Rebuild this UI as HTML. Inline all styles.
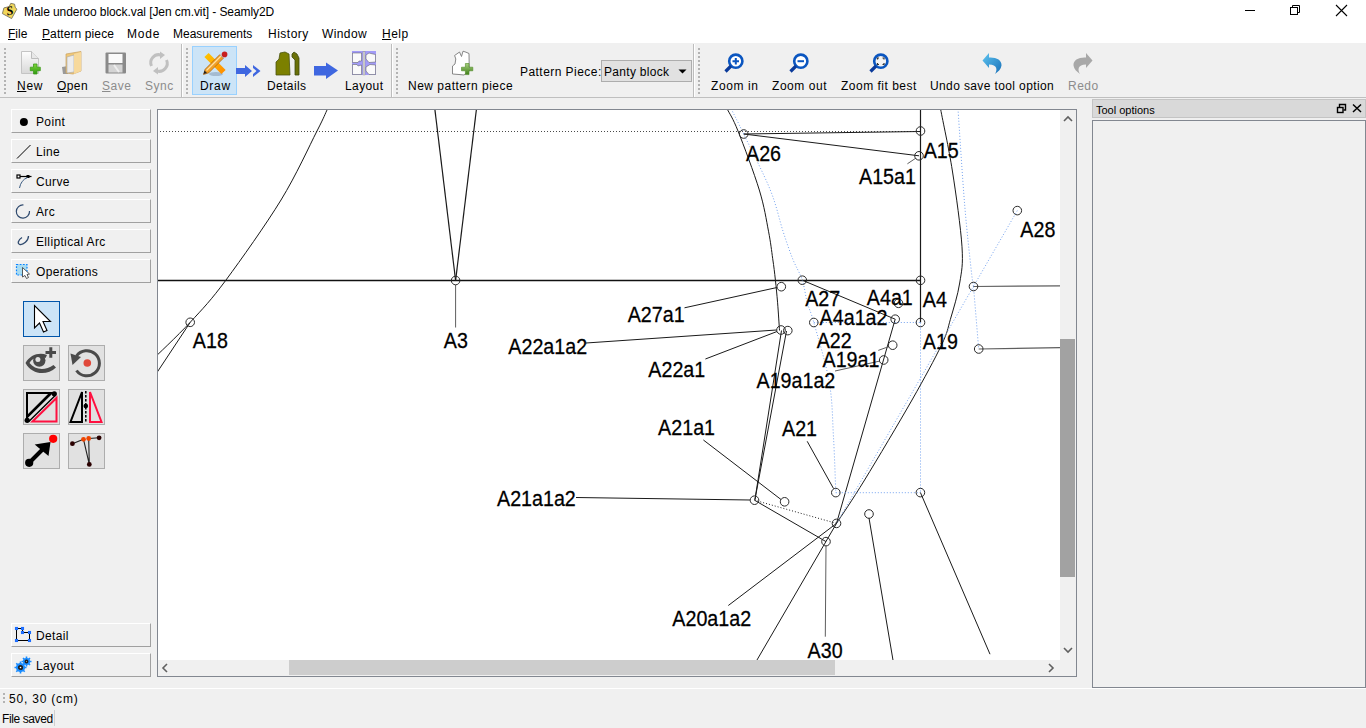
<!DOCTYPE html>
<html><head><meta charset="utf-8">
<style>
*{margin:0;padding:0;box-sizing:border-box}
html,body{width:1366px;height:728px;overflow:hidden;background:#f0f0f0;font-family:"Liberation Sans",sans-serif;font-size:12px;color:#000}
.a{position:absolute;display:block}
.t{position:absolute;white-space:nowrap;line-height:12px;font-size:12px}
.u{text-decoration:underline;text-underline-offset:1px}
.btn{position:absolute;left:11px;width:140px;height:24px;background:#f0f0f0;border-top:1px solid #fff;border-left:1px solid #fff;border-right:1px solid #a0a0a0;border-bottom:1px solid #a0a0a0}
.btn span{position:absolute;left:24px;top:6px;line-height:12px;letter-spacing:0.35px}
.btn svg{position:absolute;left:0;top:0}
.tb{position:absolute;width:37px;height:36px;background:#e1e1e1;border:1px solid #adadad}
.tb svg{position:absolute;left:-1px;top:-1px}
.grip{position:absolute;width:2px;background-image:linear-gradient(#b3b3b3 0 2px,transparent 2px);background-size:2px 4px;background-repeat:repeat-y}
.dis{color:#8c8c8c}
</style></head><body>
<!-- title + menu background -->
<div class="a" style="left:0;top:0;width:1366px;height:43px;background:#fff"></div>
<svg class="a" style="left:0;top:0" width="24" height="22" viewBox="0 0 24 22">
<path d="M10.8,3.3 L14.6,4.2 L15.2,7.2 L16.8,9.2 L11.6,18.6 L2.4,13.6 L3.9,7.9 L9.2,6.6 Z" fill="#f2d65a" stroke="#6b6a55" stroke-width="0.8"/>
<text transform="translate(7.2,15.5) rotate(-12)" font-family="Liberation Serif" font-style="italic" font-weight="bold" font-size="12.5" fill="#000">S</text>
</svg>
<div class="t" style="left:24px;top:6px;letter-spacing:-0.07px">Male underoo block.val [Jen cm.vit] - Seamly2D</div>
<!-- window controls -->
<div class="a" style="left:1245px;top:10px;width:10px;height:1px;background:#000"></div>
<svg class="a" style="left:1289px;top:4px" width="12" height="12"><rect x="1.5" y="3.5" width="7" height="7" fill="none" stroke="#000"/><path d="M3.5,3.5 V1.5 H10.5 V8.5 H8.5" fill="none" stroke="#000"/></svg>
<svg class="a" style="left:1335px;top:4px" width="13" height="13"><path d="M1,1 L12,12 M12,1 L1,12" stroke="#000" stroke-width="1.1"/></svg>
<!-- menu -->
<div class="t" style="left:8px;top:28px"><span class="u">F</span>ile</div>
<div class="t" style="left:42px;top:28px;letter-spacing:0.1px"><span class="u">P</span>attern piece</div>
<div class="t" style="left:127px;top:28px;letter-spacing:0.8px">Mode</div>
<div class="t" style="left:173px;top:28px">Measurements</div>
<div class="t" style="left:268px;top:28px;letter-spacing:0.5px">History</div>
<div class="t" style="left:322px;top:28px;letter-spacing:0.4px">Window</div>
<div class="t" style="left:382px;top:28px;letter-spacing:0.5px"><span class="u">H</span>elp</div>

<!-- toolbar -->
<div class="a" style="left:0;top:97px;width:1366px;height:1px;background:#bfbfbf"></div>
<div class="grip" style="left:4px;top:48px;height:46px"></div>
<div class="a" style="left:181px;top:44px;width:1px;height:53px;background:#bdbdbd"></div><div class="a" style="left:182px;top:44px;width:1px;height:53px;background:#fff"></div>
<div class="grip" style="left:186px;top:48px;height:46px"></div>
<div class="a" style="left:391px;top:44px;width:1px;height:53px;background:#bdbdbd"></div><div class="a" style="left:392px;top:44px;width:1px;height:53px;background:#fff"></div>
<div class="grip" style="left:396px;top:48px;height:46px"></div>
<div class="a" style="left:693px;top:44px;width:1px;height:53px;background:#bdbdbd"></div><div class="a" style="left:694px;top:44px;width:1px;height:53px;background:#fff"></div>
<div class="grip" style="left:698px;top:48px;height:46px"></div>

<!-- New -->
<svg class="a" style="left:18px;top:49px" width="26" height="28" viewBox="0 0 26 28">
<defs><linearGradient id="gdoc" x1="0" y1="0" x2="0" y2="1"><stop offset="0" stop-color="#fdfdfd"/><stop offset="1" stop-color="#d8d8d8"/></linearGradient>
<linearGradient id="ggr" x1="0" y1="0" x2="0" y2="1"><stop offset="0" stop-color="#7fd63a"/><stop offset="1" stop-color="#2f9a12"/></linearGradient></defs>
<path d="M3.5,2.5 H13.5 L20.5,9.5 V24.5 H3.5 Z" fill="url(#gdoc)" stroke="#c4c4c4"/>
<path d="M13.5,2.5 V9.5 H20.5" fill="#e8e8e8" stroke="#bdbdbd"/>
<path d="M12.3,18.2 H15.5 V15 H19 V18.2 H22.3 V21.7 H19 V25 H15.5 V21.7 H12.3 Z" fill="url(#ggr)" stroke="#3d9a1b" stroke-width="0.8"/>
</svg>
<div class="t" style="left:17px;top:80px;letter-spacing:0.7px"><span class="u">N</span>ew</div>
<!-- Open -->
<svg class="a" style="left:60px;top:50px" width="24" height="26" viewBox="0 0 24 26">
<path d="M2,17 L8,16 L8,24 L3,24 Z" fill="#9a9a9a"/>
<path d="M6,4 L21,1.5 L21,21 L13,24 L6,23 Z" fill="#f0c878" stroke="#c9a060" stroke-width="0.7"/>
<path d="M7,7 L14,5 L14,22 L7,23 Z" fill="#ececec" stroke="#a8a8a8" stroke-width="0.6"/>
<path d="M14,4 L21,2 L21,21 L14,24 Z" fill="#f7d99c"/>
</svg>
<div class="t" style="left:57px;top:80px;letter-spacing:0.4px"><span class="u">O</span>pen</div>
<!-- Save -->
<svg class="a" style="left:105px;top:52px" width="22" height="22" viewBox="0 0 22 22">
<rect x="0.5" y="0.5" width="20.5" height="21" rx="1" fill="#8a8a8a"/>
<rect x="3.5" y="2" width="14" height="9" fill="#fafafa"/>
<rect x="3.5" y="12.5" width="14" height="8" fill="#d4d4d4"/>
<path d="M9,13 L14,20" stroke="#eee" stroke-width="2"/>
</svg>
<div class="t dis" style="left:102px;top:80px;letter-spacing:0.5px"><span class="u">S</span>ave</div>
<!-- Sync -->
<svg class="a" style="left:147px;top:51px" width="24" height="24" viewBox="0 0 24 24">
<path d="M4.5,15 A8,8 0 0 1 14,4" fill="none" stroke="#c0c0c0" stroke-width="3"/>
<path d="M13,0.5 L18,4 L13,8 Z" fill="#c0c0c0"/>
<path d="M19.5,9 A8,8 0 0 1 10,20" fill="none" stroke="#c0c0c0" stroke-width="3"/>
<path d="M11,16 L6,20 L11,23.5 Z" fill="#c0c0c0"/>
</svg>
<div class="t dis" style="left:145px;top:80px;letter-spacing:0.5px">Sync</div>

<!-- Draw (active) -->
<div class="a" style="left:192px;top:46px;width:45px;height:49px;background:#cce4f7;border:1px solid #99d1ff"></div>
<svg class="a" style="left:200px;top:50px" width="30" height="28" viewBox="0 0 30 28">
<defs><linearGradient id="grul" x1="0" y1="0" x2="1" y2="1"><stop offset="0" stop-color="#ffc800"/><stop offset="1" stop-color="#ff8a00"/></linearGradient></defs>
<ellipse cx="16" cy="24" rx="7" ry="2" fill="#8aa0b8" opacity="0.6"/>
<path d="M8.6,2.9 L25.6,19.9 L21.4,24.1 L4.4,7.1 Z" fill="url(#grul)"/>
<path d="M3.5,24.5 L5.2,19.2 L19.7,4.7 L23.3,8.3 L8.8,22.8 Z" fill="#f0a028" stroke="#a85c08" stroke-width="0.7"/>
<path d="M6.5,20.5 L21,6" stroke="#ffe0a0" stroke-width="1.2"/>
<path d="M19.7,4.7 L21.5,2.9 L25.1,6.5 L23.3,8.3 Z" fill="#c8c8c8"/>
<circle cx="24.6" cy="4.4" r="2.8" fill="#c82020"/>
<path d="M3.5,24 L4.5,20.5 L7,23 Z" fill="#222"/>
</svg>
<div class="t" style="left:200px;top:80px;letter-spacing:0.7px">Draw</div>
<svg class="a" style="left:236px;top:64px" width="26" height="14" viewBox="0 0 26 14">
<path d="M0,4 H9 V1 L16,7 L9,13 V10 H0 Z" fill="#3f67e0"/>
<path d="M17,1 L24.5,7 L17,13 L17,10 L20.5,7 L17,4 Z" fill="#3f67e0"/>
</svg>
<!-- Details -->
<svg class="a" style="left:274px;top:51px" width="28" height="26" viewBox="0 0 28 26">
<path d="M2,24 L2,11 L5,8 L6,2 L11,1 L15,3 L16,24 Z" fill="#7c8000" stroke="#4b5410" stroke-width="0.8"/>
<path d="M18,3 L20,1 L23,3 L25,7 L25,24 L21,24 L21,9 L18,6 Z" fill="#6a7008" stroke="#3e4a10" stroke-width="0.8"/>
</svg>
<div class="t" style="left:267px;top:80px;letter-spacing:0.4px">Details</div>
<svg class="a" style="left:313px;top:62px" width="26" height="18" viewBox="0 0 26 18">
<path d="M1,4 H13 V0.5 L25,8.5 L13,17 V13.5 H1 Z" fill="#3f67e0"/>
</svg>
<!-- Layout -->
<svg class="a" style="left:351px;top:50px" width="26" height="26" viewBox="0 0 26 26">
<rect x="1" y="1" width="24" height="24" fill="#a39cf8"/>
<path d="M1.5,3 H10.5 V11 L8,11 L7,12.5 L1.5,12.5 Z" fill="#fafafa" stroke="#555" stroke-width="0.5"/>
<path d="M1.5,14.5 L6,14.5 L7,16 L10.5,15 V24.5 H1.5 Z" fill="#fafafa" stroke="#555" stroke-width="0.5"/>
<path d="M15,5 L18,3 L22,4 L24.5,4.5 V12 L18,12.5 L15,9 Z" fill="#fafafa" stroke="#555" stroke-width="0.5"/>
<path d="M15,17 L19,14.5 L24.5,15 V24.5 H18 L15,21 Z" fill="#fafafa" stroke="#555" stroke-width="0.5"/>
<rect x="12" y="1.5" width="2" height="23.5" fill="#d8d8d8" stroke="#888" stroke-width="0.4"/>
</svg>
<div class="t" style="left:345px;top:80px;letter-spacing:0.4px">Layout</div>

<!-- New pattern piece -->
<svg class="a" style="left:450px;top:49px" width="26" height="28" viewBox="0 0 26 28">
<defs><linearGradient id="ggr2" x1="0" y1="0" x2="0" y2="1"><stop offset="0" stop-color="#a8d080"/><stop offset="1" stop-color="#3f7f18"/></linearGradient></defs>
<path d="M4.6,6.5 L9.5,3 L11.5,7.5 L13,2.2 L16,3.2 L19,4.5 L19.3,22 L14,26 L9,25.5 L2.5,25 L2.5,17 L5,15 L5.8,10 Z" fill="#fff" stroke="#7a7a7a" stroke-width="0.9"/>
<path d="M11.5,18.2 H15.4 V14.5 H19 V18.2 H22.8 V21.8 H19 V25.6 H15.4 V21.8 H11.5 Z" fill="url(#ggr2)" stroke="#4e8a24" stroke-width="0.6"/>
</svg>
<div class="t" style="left:408px;top:80px;letter-spacing:0.5px">New pattern piece</div>
<div class="t" style="left:520px;top:66px;letter-spacing:0.45px">Pattern Piece:</div>
<div class="a" style="left:601px;top:60px;width:91px;height:22px;background:#e1e1e1;border:1px solid #adadad"></div>
<div class="t" style="left:604px;top:66px;letter-spacing:0.3px">Panty block</div>
<svg class="a" style="left:678px;top:69px" width="10" height="6"><path d="M0.5,0.5 H8.5 L4.5,4.5 Z" fill="#000"/></svg>

<!-- Zoom icons -->
<svg class="a" style="left:722px;top:50px" width="24" height="24" viewBox="0 0 24 24">
<circle cx="13.8" cy="11.2" r="6.6" fill="#fff" stroke="#0b56c0" stroke-width="2.6"/>
<path d="M9,16 L3.5,21.5" stroke="#0a3a9a" stroke-width="3.2"/>
<path d="M10.5,11.2 H17 M13.8,8 V14.5" stroke="#0b56c0" stroke-width="2"/>
</svg>
<div class="t" style="left:711px;top:80px;letter-spacing:0.6px">Zoom in</div>
<svg class="a" style="left:787px;top:50px" width="24" height="24" viewBox="0 0 24 24">
<circle cx="13.8" cy="11.2" r="6.6" fill="#fff" stroke="#0b56c0" stroke-width="2.6"/>
<path d="M9,16 L3.5,21.5" stroke="#0a3a9a" stroke-width="3.2"/>
<path d="M10.5,11.2 H17" stroke="#0b56c0" stroke-width="2"/>
</svg>
<div class="t" style="left:772px;top:80px;letter-spacing:0.55px">Zoom out</div>
<svg class="a" style="left:867px;top:50px" width="24" height="24" viewBox="0 0 24 24">
<circle cx="13.8" cy="11.2" r="6.6" fill="#f4f4f4" stroke="#0b56c0" stroke-width="2.6"/>
<path d="M9,16 L3.5,21.5" stroke="#0a3a9a" stroke-width="3.2"/>
<path d="M10.5,9.5 V8 H12 M15.5,8 H17 V9.5 M17,13 V14.5 H15.5 M12,14.5 H10.5 V13" fill="none" stroke="#333" stroke-width="1.2"/>
</svg>
<div class="t" style="left:841px;top:80px;letter-spacing:0.5px">Zoom fit best</div>
<!-- Undo / Redo -->
<svg class="a" style="left:981px;top:51px" width="22" height="24" viewBox="0 0 22 24">
<defs><linearGradient id="gund" x1="0" y1="0" x2="1" y2="1"><stop offset="0" stop-color="#5ec4f0"/><stop offset="1" stop-color="#1870b8"/></linearGradient></defs>
<path d="M1.5,9.5 L8,2 V6.5 C15,6 21,9 20.5,14.5 C20,18 17.5,20.5 14,23 C16.5,19 16.5,13.5 8,13.5 V17 Z" fill="url(#gund)"/>
</svg>
<div class="t" style="left:930px;top:80px;letter-spacing:0.38px">Undo save tool option</div>
<svg class="a" style="left:1072px;top:51px" width="22" height="24" viewBox="0 0 22 24">
<path d="M20.5,9.5 L14,2 V6.5 C7,6 1,9 1.5,14.5 C2,18 4.5,20.5 8,23 C5.5,19 5.5,13.5 14,13.5 V17 Z" fill="#a8a8a8"/>
</svg>
<div class="t dis" style="left:1068px;top:80px;letter-spacing:0.5px">Redo</div>

<!-- left panel buttons -->
<div class="btn" style="top:109px"><svg width="24" height="24"><circle cx="11.9" cy="11.9" r="4" fill="#000"/></svg><span>Point</span></div>
<div class="btn" style="top:139px"><svg width="24" height="24"><path d="M5,18.5 L18.5,5" stroke="#000" stroke-width="1"/></svg><span>Line</span></div>
<div class="btn" style="top:169px"><svg width="24" height="24"><path d="M6.5,6.5 H19.5" stroke="#000" stroke-width="1.2"/><rect x="5" y="5" width="3" height="3" fill="#fff" stroke="#000" stroke-width="1.2"/><rect x="14.5" y="5" width="3" height="3" fill="#000"/><path d="M15.5,7.5 Q9,10 7.5,18" fill="none" stroke="#3a5a80" stroke-width="1"/></svg><span>Curve</span></div>
<div class="btn" style="top:199px"><svg width="24" height="24"><path d="M11.5,5 A6.6,6.6 0 1 0 17.5,11" fill="none" stroke="#2f4a6e" stroke-width="1.2"/></svg><span>Arc</span></div>
<div class="btn" style="top:229px"><svg width="24" height="24"><path d="M10,7.5 C6,10 5,14 8,14.5 C11,15 16.5,11 16.5,6" fill="none" stroke="#2f4a6e" stroke-width="1.3"/></svg><span>Elliptical Arc</span></div>
<div class="btn" style="top:259px"><svg width="24" height="24"><rect x="4.5" y="4.5" width="10.5" height="10.5" fill="#a8dcf2" stroke="#0a84ff" stroke-width="1.2" stroke-dasharray="1.8 1.4"/><path d="M10.5,7.5 L17.5,14 L15,14.5 L16.5,17.5 L14.5,18.5 L13,15.5 L10.5,17 Z" fill="#fff" stroke="#333" stroke-width="0.8"/></svg><span>Operations</span></div>
<div class="btn" style="top:623px"><svg width="24" height="24"><path d="M4.5,4.5 H10.5 V8.5 H17.5 V16.5 H4.5 Z" fill="none" stroke="#000" stroke-width="1"/><g fill="#fff" stroke="#1a6cff" stroke-width="1.1"><rect x="3.5" y="3.5" width="2" height="2"/><rect x="9.5" y="3.5" width="2" height="2"/><rect x="9.5" y="7.5" width="2" height="2"/><rect x="16.5" y="7.5" width="2" height="2"/><rect x="16.5" y="15.5" width="2" height="2"/><rect x="3.5" y="15.5" width="2" height="2"/></g></svg><span>Detail</span></div>
<div class="btn" style="top:653px"><svg width="24" height="24"><g fill="#1a8cff"><circle cx="8.5" cy="13.5" r="4.6"/><circle cx="14.5" cy="7.5" r="3.6"/></g><g stroke="#1a8cff" stroke-width="1.6"><path d="M8.5,7.5 V19.5 M2.5,13.5 H14.5 M4.3,9.3 L12.7,17.7 M12.7,9.3 L4.3,17.7"/><path d="M14.5,2.5 V12.5 M9.5,7.5 H19.5 M11,4 L18,11 M18,4 L11,11"/></g><circle cx="8.5" cy="13.5" r="1.7" fill="#fff" stroke="#222" stroke-width="1.8"/><circle cx="14.5" cy="7.5" r="1.2" fill="#fff" stroke="#222" stroke-width="1.5"/></svg><span>Layout</span></div>

<!-- tool grid -->
<div class="tb" style="left:23px;top:301px;background:#cce4f7;border-color:#0055aa"><svg width="37" height="36" viewBox="0 0 37 36"><path d="M11.5,4.5 V27 L16.5,22 L20.5,31 L24,29.5 L20,20.5 H27.5 Z" fill="#fff" stroke="#000" stroke-width="1.1"/></svg></div>
<div class="tb" style="left:23px;top:345px"><svg width="37" height="36" viewBox="0 0 37 36"><path d="M2.5,18 C7,10 16,7 24,10 L22.5,13 C16,11 9,13 6.5,18 C12,25 22,26 30.5,20 L33,22.5 C24,31 9,30 2.5,18 Z" fill="#4a4a4a"/><circle cx="16.3" cy="15.6" r="6.2" fill="#4a4a4a"/><circle cx="14.9" cy="14.4" r="2.5" fill="#e1e1e1"/><path d="M22.5,7.5 H33 M27.8,2.3 V12.8" stroke="#4a4a4a" stroke-width="3"/></svg></div>
<div class="tb" style="left:68px;top:345px"><svg width="37" height="36" viewBox="0 0 37 36"><path d="M8.5,11 A12.6,12.6 0 1 1 8.5,25.5" fill="none" stroke="#4a4a4a" stroke-width="3"/><path d="M2.5,8.5 L13,12 L4.5,20 Z" fill="#4a4a4a"/><circle cx="19.3" cy="18" r="3.8" fill="#e0483a"/></svg></div>
<div class="tb" style="left:23px;top:389px"><svg width="37" height="36" viewBox="0 0 37 36"><path d="M4,4 H27.5 L4,27.5 Z" fill="none" stroke="#000" stroke-width="2"/><path d="M5.8,32.5 L32.5,6.3 M3,29.8 L29.8,3.3" stroke="#000" stroke-width="1.4"/><circle cx="4.2" cy="31.3" r="2.6" fill="#000"/><circle cx="31.3" cy="4.8" r="2.6" fill="#000"/><path d="M33.5,9 V32.5 H9.5 Z" fill="none" stroke="#ff1040" stroke-width="2"/></svg></div>
<div class="tb" style="left:68px;top:389px"><svg width="37" height="36" viewBox="0 0 37 36"><path d="M14,3 V33 H2.5 Z" fill="none" stroke="#000" stroke-width="2"/><path d="M17.8,2 V34" stroke="#000" stroke-width="1.5" stroke-dasharray="2.5 1.5"/><circle cx="17.8" cy="17" r="2.3" fill="#000"/><path d="M22,3 V33 H33.5 Z" fill="none" stroke="#ff1040" stroke-width="2"/></svg></div>
<div class="tb" style="left:23px;top:433px"><svg width="37" height="36" viewBox="0 0 37 36"><circle cx="6.2" cy="29.8" r="4.1" fill="#000"/><path d="M7,29 L22,14" stroke="#000" stroke-width="4"/><path d="M27.5,9 L11.7,11.5 L25.5,23 Z" fill="#000"/><circle cx="30.2" cy="5.8" r="4.1" fill="#ff0000"/></svg></div>
<div class="tb" style="left:68px;top:433px"><svg width="37" height="36" viewBox="0 0 37 36"><path d="M4.4,10.7 L15.5,6.3 L21.3,31.4 M20.7,5.5 L31.1,4.8 M20.7,5.5 L21.3,31.4" fill="none" stroke="#222" stroke-width="1.1"/><g fill="#2a0000"><circle cx="4.4" cy="10.7" r="2.4"/><circle cx="31.1" cy="4.8" r="2.4"/><circle cx="21.3" cy="31.4" r="2.4"/></g><g fill="#ee4400"><circle cx="15.5" cy="6.3" r="2.4"/><circle cx="20.7" cy="5.5" r="2.4"/></g></svg></div>

<!-- canvas frame -->
<div class="a" style="left:157px;top:109px;width:920px;height:568px;border:1px solid #828790;background:#fff"></div>
<svg class="a" style="left:158px;top:110px" width="902" height="550" viewBox="158 110 902 550"><g font-family="Liberation Sans" font-size="20" fill="#000" stroke="#000" stroke-width="0.25"><line x1="160.0" y1="131.5" x2="920.5" y2="131.5" stroke="#4a4a4a" stroke-width="1" stroke-dasharray="1 2"/>
<path d="M333.0,98.0 C332.1,99.8 330.2,103.5 327.5,109.0 C324.8,114.5 324.8,115.8 317.0,131.0 C309.2,146.2 296.2,175.2 281.0,200.0 C265.8,224.8 241.1,259.6 226.0,280.0 C210.9,300.4 202.9,308.6 190.2,322.3 C177.5,336.0 156.7,355.4 150.0,362.0" fill="none" stroke="#1a1a1a" stroke-width="1"/>
<line x1="190.1" y1="322.5" x2="140.0" y2="398.2" stroke="#1a1a1a" stroke-width="1"/>
<line x1="158.0" y1="280.5" x2="920.5" y2="280.5" stroke="#111" stroke-width="1.3"/>
<line x1="433.5" y1="98.0" x2="455.6" y2="280.5" stroke="#1a1a1a" stroke-width="1.2"/>
<line x1="477.8" y1="98.0" x2="455.6" y2="280.5" stroke="#1a1a1a" stroke-width="1.2"/>
<line x1="455.6" y1="285.0" x2="455.6" y2="327.5" stroke="#5e5e5e" stroke-width="1"/>
<line x1="743.7" y1="134.0" x2="920.5" y2="131.5" stroke="#1a1a1a" stroke-width="1"/>
<line x1="743.7" y1="134.0" x2="919.0" y2="155.8" stroke="#1a1a1a" stroke-width="1"/>
<line x1="907.4" y1="163.8" x2="916.0" y2="158.0" stroke="#5e5e5e" stroke-width="1"/>
<path d="M721.0,98.0 C722.0,99.8 724.4,103.5 727.2,109.0 C730.0,114.5 732.6,117.5 738.0,131.0 C743.4,144.5 754.2,173.3 759.3,190.0 C764.4,206.7 766.3,219.8 768.5,231.2 C770.7,242.6 771.6,250.6 772.7,258.7 C773.9,266.8 774.6,272.6 775.4,280.0 C776.2,287.4 776.9,294.4 777.6,302.8 C778.3,311.2 779.2,325.9 779.5,330.5" fill="none" stroke="#1a1a1a" stroke-width="1"/>
<path d="M726.0,98.0 C726.9,99.8 728.3,103.0 731.3,109.0 C734.2,115.0 737.2,120.5 743.7,134.0 C750.2,147.5 763.8,173.8 770.3,190.0 C776.8,206.2 779.3,219.8 783.0,231.2 C786.7,242.6 789.4,250.6 792.6,258.7 C795.8,266.8 799.8,272.6 802.2,280.0 C804.7,287.4 805.4,295.7 807.3,302.8 C809.2,309.9 810.1,309.2 813.8,322.5 C817.5,335.8 826.0,363.2 829.3,382.4 C832.6,401.5 832.4,419.0 833.5,437.4 C834.6,455.8 835.4,483.4 835.8,492.6" fill="none" stroke="#74a2ef" stroke-width="1" stroke-dasharray="1 2"/>
<line x1="920.5" y1="98.0" x2="920.5" y2="322.5" stroke="#1a1a1a" stroke-width="1.2"/>
<line x1="920.5" y1="322.5" x2="920.5" y2="492.5" stroke="#74a2ef" stroke-width="1" stroke-dasharray="1 2"/>
<path d="M939.0,98.0 C939.3,99.8 938.4,96.8 940.6,109.0 C942.8,121.2 948.8,148.0 952.4,171.0 C956.0,194.0 960.8,228.1 962.0,246.8 C963.2,265.5 961.6,270.9 959.7,283.0 C957.8,295.1 953.4,309.0 950.4,319.3 C947.4,329.6 947.9,331.6 941.5,345.0 C935.1,358.4 924.8,377.5 912.0,400.0 C899.2,422.5 877.2,459.4 864.6,480.0 C852.0,500.6 841.2,516.2 836.5,523.4" fill="none" stroke="#1a1a1a" stroke-width="1"/>
<path d="M957.5,98.0 C957.6,99.8 956.8,91.3 958.0,109.0 C959.2,126.7 962.4,177.2 964.6,204.0 C966.8,230.8 969.7,256.2 971.2,270.0 C972.7,283.8 973.1,283.8 973.5,286.5" fill="none" stroke="#74a2ef" stroke-width="1" stroke-dasharray="1 2"/>
<line x1="973.5" y1="286.5" x2="978.7" y2="349.0" stroke="#74a2ef" stroke-width="1" stroke-dasharray="1 2"/>
<line x1="1017.3" y1="210.6" x2="836.5" y2="523.4" stroke="#74a2ef" stroke-width="1" stroke-dasharray="1 2"/>
<line x1="973.5" y1="286.5" x2="1060.0" y2="285.8" stroke="#5e5e5e" stroke-width="1.2"/>
<line x1="978.7" y1="349.0" x2="1060.0" y2="347.6" stroke="#5e5e5e" stroke-width="1.2"/>
<line x1="802.3" y1="280.2" x2="895.2" y2="319.2" stroke="#1a1a1a" stroke-width="1"/>
<line x1="895.2" y1="319.2" x2="836.5" y2="523.4" stroke="#1a1a1a" stroke-width="1"/>
<line x1="813.8" y1="322.5" x2="920.5" y2="322.5" stroke="#74a2ef" stroke-width="1" stroke-dasharray="1 2"/>
<line x1="684.5" y1="307.8" x2="777.0" y2="287.5" stroke="#1a1a1a" stroke-width="1"/>
<line x1="586.0" y1="343.0" x2="776.5" y2="330.0" stroke="#1a1a1a" stroke-width="1"/>
<line x1="705.4" y1="359.0" x2="777.0" y2="331.5" stroke="#1a1a1a" stroke-width="1"/>
<line x1="781.5" y1="330.5" x2="754.9" y2="499.8" stroke="#1a1a1a" stroke-width="1"/>
<line x1="786.5" y1="331.0" x2="754.9" y2="499.8" stroke="#1a1a1a" stroke-width="1"/>
<line x1="576.0" y1="497.5" x2="750.0" y2="500.0" stroke="#1a1a1a" stroke-width="1"/>
<line x1="703.4" y1="440.0" x2="781.0" y2="499.5" stroke="#1a1a1a" stroke-width="1"/>
<line x1="807.2" y1="441.3" x2="833.5" y2="488.5" stroke="#1a1a1a" stroke-width="1"/>
<line x1="835.8" y1="492.7" x2="920.4" y2="492.7" stroke="#74a2ef" stroke-width="1" stroke-dasharray="1 2"/>
<line x1="754.5" y1="500.2" x2="826.0" y2="541.6" stroke="#1a1a1a" stroke-width="1"/>
<line x1="754.5" y1="500.2" x2="836.5" y2="523.4" stroke="#222" stroke-width="1" stroke-dasharray="1 2"/>
<line x1="836.5" y1="523.4" x2="750.0" y2="672.0" stroke="#1a1a1a" stroke-width="1"/>
<line x1="728.3" y1="605.5" x2="836.5" y2="523.4" stroke="#1a1a1a" stroke-width="1"/>
<line x1="826.0" y1="546.0" x2="825.3" y2="636.7" stroke="#5e5e5e" stroke-width="1"/>
<line x1="869.0" y1="518.0" x2="895.0" y2="672.0" stroke="#1a1a1a" stroke-width="1"/>
<line x1="920.4" y1="492.5" x2="990.0" y2="654.2" stroke="#1a1a1a" stroke-width="1"/>
<line x1="835.0" y1="371.0" x2="880.0" y2="361.0" stroke="#5e5e5e" stroke-width="1"/>
<line x1="878.3" y1="350.4" x2="889.0" y2="346.5" stroke="#5e5e5e" stroke-width="1"/>
<circle cx="190.2" cy="322.3" r="4.3" fill="none" stroke="#2a2a2a" stroke-width="1"/>
<circle cx="455.6" cy="280.5" r="4.3" fill="none" stroke="#2a2a2a" stroke-width="1"/>
<circle cx="743.7" cy="134.0" r="4.3" fill="none" stroke="#2a2a2a" stroke-width="1"/>
<circle cx="920.5" cy="131.0" r="4.3" fill="none" stroke="#2a2a2a" stroke-width="1"/>
<circle cx="919.0" cy="155.8" r="4.3" fill="none" stroke="#2a2a2a" stroke-width="1"/>
<circle cx="1017.3" cy="210.6" r="4.3" fill="none" stroke="#2a2a2a" stroke-width="1"/>
<circle cx="802.3" cy="280.2" r="4.3" fill="none" stroke="#2a2a2a" stroke-width="1"/>
<circle cx="920.5" cy="280.3" r="4.3" fill="none" stroke="#2a2a2a" stroke-width="1"/>
<circle cx="973.5" cy="286.5" r="4.3" fill="none" stroke="#2a2a2a" stroke-width="1"/>
<circle cx="781.3" cy="286.7" r="4.3" fill="none" stroke="#2a2a2a" stroke-width="1"/>
<circle cx="898.5" cy="303.3" r="4.3" fill="none" stroke="#2a2a2a" stroke-width="1"/>
<circle cx="895.2" cy="319.2" r="4.3" fill="none" stroke="#2a2a2a" stroke-width="1"/>
<circle cx="813.8" cy="322.5" r="4.3" fill="none" stroke="#2a2a2a" stroke-width="1"/>
<circle cx="920.5" cy="322.5" r="4.3" fill="none" stroke="#2a2a2a" stroke-width="1"/>
<circle cx="781.0" cy="330.0" r="4.3" fill="none" stroke="#2a2a2a" stroke-width="1"/>
<circle cx="787.8" cy="330.6" r="4.3" fill="none" stroke="#2a2a2a" stroke-width="1"/>
<circle cx="892.7" cy="345.2" r="4.3" fill="none" stroke="#2a2a2a" stroke-width="1"/>
<circle cx="978.7" cy="349.0" r="4.3" fill="none" stroke="#2a2a2a" stroke-width="1"/>
<circle cx="883.7" cy="360.0" r="4.3" fill="none" stroke="#2a2a2a" stroke-width="1"/>
<circle cx="835.8" cy="492.6" r="4.3" fill="none" stroke="#2a2a2a" stroke-width="1"/>
<circle cx="920.4" cy="492.6" r="4.3" fill="none" stroke="#2a2a2a" stroke-width="1"/>
<circle cx="754.5" cy="500.2" r="4.3" fill="none" stroke="#2a2a2a" stroke-width="1"/>
<circle cx="784.6" cy="501.8" r="4.3" fill="none" stroke="#2a2a2a" stroke-width="1"/>
<circle cx="869.0" cy="514.0" r="4.3" fill="none" stroke="#2a2a2a" stroke-width="1"/>
<circle cx="836.5" cy="523.4" r="4.3" fill="none" stroke="#2a2a2a" stroke-width="1"/>
<circle cx="826.0" cy="541.6" r="4.3" fill="none" stroke="#2a2a2a" stroke-width="1"/>
<text transform="translate(192.8,348.0) scale(0.985,1.12)">A18</text>
<text transform="translate(443.8,348.0) scale(0.985,1.12)">A3</text>
<text transform="translate(746.0,160.5) scale(0.985,1.12)">A26</text>
<text transform="translate(923.7,157.8) scale(0.985,1.12)">A15</text>
<text transform="translate(859.0,183.7) scale(0.985,1.12)">A15a1</text>
<text transform="translate(1020.3,236.5) scale(0.985,1.12)">A28</text>
<text transform="translate(805.2,306.2) scale(0.985,1.12)">A27</text>
<text transform="translate(866.8,304.6) scale(0.985,1.12)">A4a1</text>
<text transform="translate(922.8,306.8) scale(0.985,1.12)">A4</text>
<text transform="translate(819.6,325.4) scale(0.985,1.12)">A4a1a2</text>
<text transform="translate(816.7,348.0) scale(0.985,1.12)">A22</text>
<text transform="translate(922.8,348.9) scale(0.985,1.12)">A19</text>
<text transform="translate(822.5,366.7) scale(0.985,1.12)">A19a1</text>
<text transform="translate(756.5,387.9) scale(0.985,1.12)">A19a1a2</text>
<text transform="translate(627.7,321.6) scale(0.985,1.12)">A27a1</text>
<text transform="translate(508.3,353.5) scale(0.985,1.12)">A22a1a2</text>
<text transform="translate(648.3,376.5) scale(0.985,1.12)">A22a1</text>
<text transform="translate(658.1,434.6) scale(0.985,1.12)">A21a1</text>
<text transform="translate(782.0,436.4) scale(0.985,1.12)">A21</text>
<text transform="translate(497.0,505.8) scale(0.985,1.12)">A21a1a2</text>
<text transform="translate(672.3,626.1) scale(0.985,1.12)">A20a1a2</text>
<text transform="translate(807.6,657.5) scale(0.985,1.12)">A30</text></g></svg>
<!-- scrollbars -->
<div class="a" style="left:1060px;top:110px;width:16px;height:550px;background:#f0f0f0"></div>
<div class="a" style="left:1060px;top:339px;width:15px;height:238px;background:#a2a2a2"></div>
<svg class="a" style="left:1062px;top:114px" width="12" height="10"><path d="M2,7 L6,3 L10,7" fill="none" stroke="#606060" stroke-width="1.6"/></svg>
<svg class="a" style="left:1062px;top:645px" width="12" height="10"><path d="M2,3 L6,7 L10,3" fill="none" stroke="#606060" stroke-width="1.6"/></svg>
<div class="a" style="left:158px;top:660px;width:902px;height:16px;background:#f0f0f0"></div>
<div class="a" style="left:289px;top:660px;width:546px;height:15px;background:#cdcdcd"></div>
<svg class="a" style="left:160px;top:662px" width="10" height="12"><path d="M7,2 L3,6 L7,10" fill="none" stroke="#606060" stroke-width="1.6"/></svg>
<svg class="a" style="left:1046px;top:662px" width="10" height="12"><path d="M3,2 L7,6 L3,10" fill="none" stroke="#606060" stroke-width="1.6"/></svg>
<div class="a" style="left:1060px;top:660px;width:16px;height:16px;background:#f0f0f0"></div>

<!-- tool options -->
<div class="a" style="left:1092px;top:99px;width:274px;height:19px;background:#d9d9d9;border:1px solid #c4c4c4"></div>
<div class="t" style="left:1096px;top:105px;font-size:11px;line-height:11px">Tool options</div>
<svg class="a" style="left:1336px;top:103px" width="11" height="11"><rect x="1.5" y="4.5" width="5.5" height="5" fill="none" stroke="#000" stroke-width="1.4"/><path d="M3.5,4 V1.5 H9.5 V7 H7.5" fill="none" stroke="#000" stroke-width="1.4"/></svg>
<svg class="a" style="left:1352px;top:103px" width="10" height="10"><path d="M1,1.5 L9,9 M9,1.5 L1,9" stroke="#000" stroke-width="1.5"/></svg>
<div class="a" style="left:1092px;top:120px;width:274px;height:568px;border:1px solid #828790;border-right-color:#828790;background:#f0f0f0"></div>

<!-- status -->
<div class="a" style="left:0;top:688px;width:1366px;height:1px;background:#fff"></div>
<div class="grip" style="left:3px;top:693px;height:12px"></div>
<div class="t" style="left:9px;top:693px;letter-spacing:0.8px">50, 30 (cm)</div>
<div class="t" style="left:2px;top:713px;letter-spacing:-0.4px">File saved</div>
<div class="a" style="left:54px;top:710px;width:1px;height:16px;background:#d0d0d0"></div>
</body></html>
